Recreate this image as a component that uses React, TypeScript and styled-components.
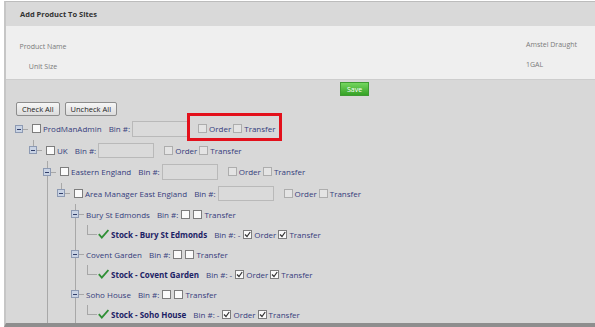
import React from "react"
import styled, { createGlobalStyle, css } from "styled-components"

const sites = ["Bury St Edmonds", "Covent Garden", "Soho House"]

export default function App() {
  return (
    <Page>
      <GlobalStyle />
      <Panel>
        <Header>Add Product To Sites</Header>
        <Info>
          <InfoRow>
            <InfoLabel>Product Name</InfoLabel>
            <InfoValue>Amstel Draught</InfoValue>
          </InfoRow>
          <InfoRow>
            <InfoLabel>Unit Size</InfoLabel>
            <InfoValue>1GAL</InfoValue>
          </InfoRow>
        </Info>
        <Body>
          <SaveButton>Save</SaveButton>
          <Actions>
            <Button>Check All</Button>
            <Button>Uncheck All</Button>
          </Actions>
          <Tree>
            <NodeRow label="ProdManAdmin" root highlight />
            <Children $indent={14}>
              <NodeRow label="UK" />
              <Children $indent={14} $guide $more>
                <NodeRow label="Eastern England" />
                <Children $indent={14}>
                  <NodeRow label="Area Manager East England" />
                  <Children $indent={14} $guide $more>
                    {sites.map((site) => (
                      <React.Fragment key={site}>
                        <SiteRow name={site} />
                        <Children $indent={14}>
                          <StockRow name={`Stock - ${site}`} />
                        </Children>
                      </React.Fragment>
                    ))}
                  </Children>
                </Children>
              </Children>
            </Children>
          </Tree>
        </Body>
      </Panel>
    </Page>
  )
}

function Expander({ stub }: { stub?: boolean }) {
  return (
    <ExpanderIcon width="13" height="20" viewBox="0 0 13 20">
      {stub && <line x1="4.5" y1="0" x2="4.5" y2="6" stroke="#a8a8a8" />}
      <line x1="8" y1="10.5" x2="13" y2="10.5" stroke="#a8a8a8" />
      <rect x="0.5" y="6.5" width="7" height="7" fill="#c9d3e4" stroke="#8d9ab3" />
      <line x1="2" y1="10.5" x2="6" y2="10.5" stroke="#33406b" />
    </ExpanderIcon>
  )
}

function Tick() {
  return (
    <svg width="7" height="7" viewBox="0 0 7 7">
      <path d="M1 3.5 L3 5.5 L6.2 1" fill="none" stroke="#333" strokeWidth="1.2" />
    </svg>
  )
}

function StockCheck() {
  return (
    <StockIcon width="11" height="10" viewBox="0 0 11 10">
      <path d="M0.8 5.2 L3.8 8.6 L10.4 1" fill="none" stroke="#2f8f35" strokeWidth="1.8" />
    </StockIcon>
  )
}

function OrderTransfer({ highlight }: { highlight?: boolean }) {
  return (
    <Options $highlight={highlight}>
      <Box $disabled />
      <OptText>Order</OptText>
      <Box $disabled $gap={2} />
      <OptText>Transfer</OptText>
    </Options>
  )
}

function NodeRow({ label, root, highlight }: { label: string; root?: boolean; highlight?: boolean }) {
  return (
    <Row>
      <Expander stub={!root} />
      <Box $gap={4} />
      <Name>{label}</Name>
      <BinLabel>Bin #:</BinLabel>
      <BinInput readOnly />
      <OrderTransfer highlight={highlight} />
    </Row>
  )
}

function SiteRow({ name }: { name: string }) {
  return (
    <Row $short>
      <Expander stub />
      <Name>{name}</Name>
      <BinLabel>Bin #:</BinLabel>
      <Box $gap={3} />
      <Box $gap={3} />
      <OptText>Transfer</OptText>
    </Row>
  )
}

function StockRow({ name }: { name: string }) {
  return (
    <Row $short>
      <Connector />
      <StockCheck />
      <Name $bold>{name}</Name>
      <BinLabel>Bin #: -</BinLabel>
      <Box $gap={3} $checked>
        <Tick />
      </Box>
      <OptText>Order</OptText>
      <Box $gap={2} $checked>
        <Tick />
      </Box>
      <OptText>Transfer</OptText>
    </Row>
  )
}

const GlobalStyle = createGlobalStyle`
  html, body {
    margin: 0;
    padding: 0;
    background: #fff;
  }
  body {
    font-family: "Open Sans", "Noto Sans", sans-serif;
  }
`

const Page = styled.div`
  display: flex;
  width: 595px;
  height: 327px;
  padding: 1px 0 0 4px;
  box-sizing: border-box;
  overflow: hidden;
  background: #fff;
`

const Panel = styled.div`
  display: flex;
  flex: 1;
  flex-direction: column;
  min-width: 0;
  border-top: 1px solid #bcbcbc;
  border-left: 2px solid #c6c6c6;
  border-bottom: 4px solid #8e8e8e;
`

const Header = styled.div`
  display: flex;
  align-items: center;
  height: 24px;
  padding-left: 14px;
  background: #d9d9d9;
  font-size: 7.5px;
  font-weight: 700;
  color: #333;
`

const Info = styled.div`
  height: 54px;
  padding-top: 10px;
  box-sizing: border-box;
  background: #efefef;
  border-bottom: 1px solid #cdcdcd;
`

const InfoRow = styled.div`
  display: flex;
  align-items: center;
  height: 20px;
  font-size: 7px;
  color: #7a7a7a;
`

const InfoLabel = styled.div`
  width: 74px;
  text-align: center;
`

const InfoValue = styled.div`
  width: 69px;
  margin-left: auto;
  margin-top: -3px;
`

const Body = styled.div`
  flex: 1;
  min-height: 0;
  overflow: hidden;
  padding: 2px 0 0 10px;
  background: #d8d8d8;
`

const SaveButton = styled.button`
  display: block;
  width: 29px;
  height: 14px;
  margin-left: 324px;
  padding: 0;
  border: 1px solid #3f9a33;
  background: linear-gradient(#74d65f, #36a226);
  color: #fff;
  font-family: inherit;
  font-size: 7px;
`

const Actions = styled.div`
  display: flex;
  gap: 5px;
  margin-top: 6px;
`

const Button = styled.button`
  height: 14px;
  padding: 0 5px;
  border: 1px solid #8d8d8d;
  border-radius: 2px;
  background: linear-gradient(#f6f6f6, #dcdcdc);
  color: #222;
  font-family: inherit;
  font-size: 7.5px;
`

const Tree = styled.div`
  margin: 2px 0 0 -1px;
  font-size: 8px;
  color: #363d7c;
`

const Children = styled.div<{ $indent: number; $guide?: boolean; $more?: boolean }>`
  margin-left: ${(p) => p.$indent}px;
  ${(p) =>
    p.$guide &&
    css`
      background: linear-gradient(#a8a8a8, #a8a8a8) no-repeat 4px 0 / 1px 100%;
    `}
  ${(p) => p.$more && "padding-bottom: 40px;"}
`

const Row = styled.div<{ $short?: boolean }>`
  display: flex;
  align-items: center;
  height: ${(p) => (p.$short ? 20 : 21.5)}px;
  white-space: nowrap;
`

const ExpanderIcon = styled.svg`
  flex: none;
  display: block;
  shape-rendering: crispEdges;
`

const StockIcon = styled.svg`
  flex: none;
  margin-left: 1px;
`

const Connector = styled.div`
  flex: none;
  align-self: flex-start;
  width: 10px;
  height: 10px;
  margin: 1px 0 0 2px;
  border-left: 1px solid #a6a6a6;
  border-bottom: 1px solid #a6a6a6;
  box-sizing: border-box;
`

const Box = styled.span<{ $gap?: number; $disabled?: boolean; $checked?: boolean }>`
  flex: none;
  display: flex;
  align-items: center;
  justify-content: center;
  width: 9px;
  height: 9px;
  margin-left: ${(p) => p.$gap ?? 0}px;
  box-sizing: border-box;
  border: 1px solid ${(p) => (p.$disabled ? "#adadad" : "#7d7d7d")};
  background: ${(p) => (p.$disabled ? "#e4e4e4" : "#fbfbfb")};
`

const Name = styled.span<{ $bold?: boolean }>`
  margin-left: 2px;
  font-weight: ${(p) => (p.$bold ? 700 : 400)};
  color: ${(p) => (p.$bold ? "#1c2265" : "inherit")};
`

const BinLabel = styled.span`
  margin-left: 7px;
`

const BinInput = styled.input`
  width: 56px;
  height: 15.5px;
  margin: 3px 0 3px 2px;
  padding: 0;
  box-sizing: border-box;
  border: 1px solid #b9b9b9;
  background: #dadada;
`

const Options = styled.span<{ $highlight?: boolean }>`
  position: relative;
  display: flex;
  align-items: center;
  height: 11px;
  margin-left: 10px;

  ${(p) =>
    p.$highlight &&
    css`
      &::after {
        content: "";
        position: absolute;
        top: -10px;
        bottom: -7px;
        left: -11px;
        right: -6px;
        border: 3px solid #e3101b;
      }
    `}
`

const OptText = styled.span`
  margin-left: 2px;
`
